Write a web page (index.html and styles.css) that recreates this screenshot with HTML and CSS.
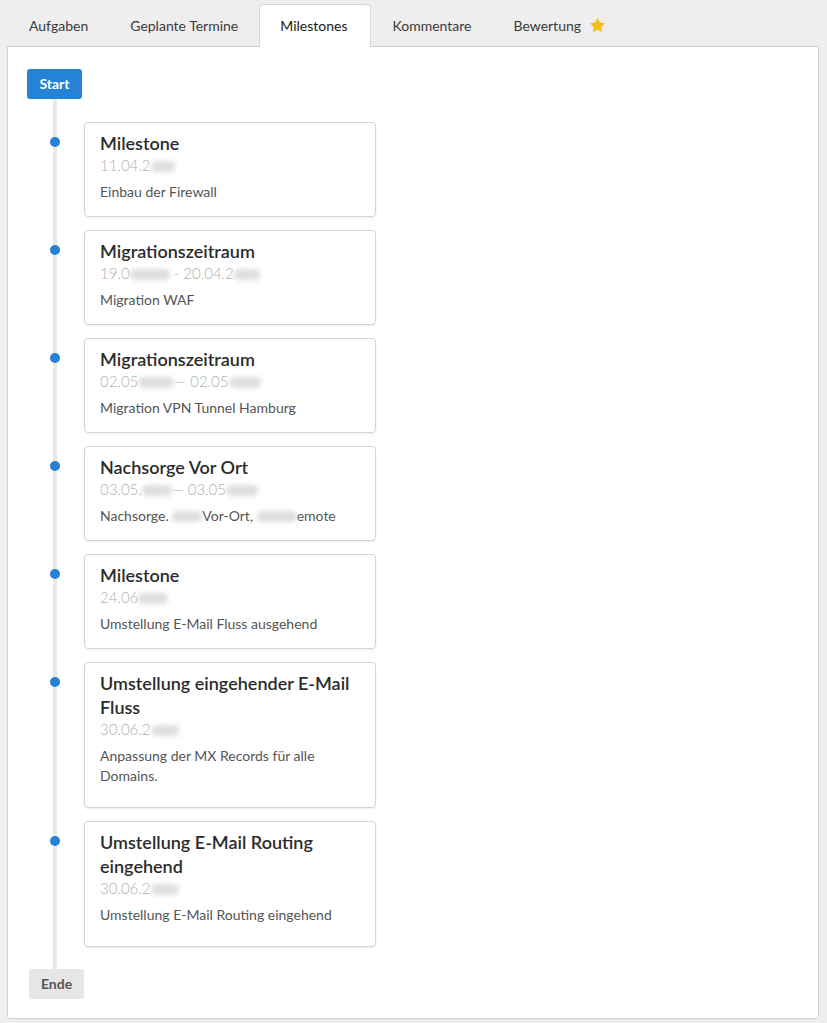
FILE: index.html
```html
<!DOCTYPE html>
<html lang="de">
<head>
    <meta charset="UTF-8">
    <meta name="viewport" content="width=device-width, initial-scale=1.0">
    <title>Milestones</title>
    <link rel="stylesheet" href="styles.css">
</head>
<body>
    <ul class="tabs">
        <li class="tab">Aufgaben</li>
        <li class="tab">Geplante Termine</li>
        <li class="tab active">Milestones</li>
        <li class="tab">Kommentare</li>
        <li class="tab">Bewertung
            <svg class="star" width="17" height="16" viewBox="0 0 24 23"><path d="M12 1l3.3 7 7.7.9-5.7 5.3 1.5 7.6L12 18l-6.8 3.8 1.5-7.6L1 8.9 8.7 8z" fill="#f6bd16"/></svg>
        </li>
    </ul>

    <div class="panel">
        <span class="pill pill-start">Start</span>

        <ul class="timeline">
            <li class="item">
                <div class="card">
                    <h3>Milestone</h3>
                    <div class="date">11.04.2<span class="blur" style="width:24px"></span></div>
                    <p>Einbau der Firewall</p>
                </div>
            </li>
            <li class="item">
                <div class="card">
                    <h3>Migrationszeitraum</h3>
                    <div class="date">19.0<span class="blur" style="width:40px"></span> - 20.04.2<span class="blur" style="width:26px"></span></div>
                    <p>Migration WAF</p>
                </div>
            </li>
            <li class="item">
                <div class="card">
                    <h3>Migrationszeitraum</h3>
                    <div class="date">02.05<span class="blur" style="width:36px"></span>— 02.05<span class="blur" style="width:32px"></span></div>
                    <p>Migration VPN Tunnel Hamburg</p>
                </div>
            </li>
            <li class="item">
                <div class="card">
                    <h3>Nachsorge Vor Ort</h3>
                    <div class="date">03.05.<span class="blur" style="width:30px"></span>— 03.05<span class="blur" style="width:32px"></span></div>
                    <p>Nachsorge. <span class="blur" style="width:30px"></span>Vor-Ort, <span class="blur" style="width:40px"></span>emote</p>
                </div>
            </li>
            <li class="item">
                <div class="card">
                    <h3>Milestone</h3>
                    <div class="date">24.06<span class="blur" style="width:30px"></span></div>
                    <p>Umstellung E-Mail Fluss ausgehend</p>
                </div>
            </li>
            <li class="item">
                <div class="card card-long">
                    <h3>Umstellung eingehender E-Mail Fluss</h3>
                    <div class="date">30.06.2<span class="blur" style="width:28px"></span></div>
                    <p>Anpassung der MX Records für alle Domains.</p>
                </div>
            </li>
            <li class="item">
                <div class="card card-long">
                    <h3>Umstellung E-Mail Routing eingehend</h3>
                    <div class="date">30.06.2<span class="blur" style="width:28px"></span></div>
                    <p>Umstellung E-Mail Routing eingehend</p>
                </div>
            </li>
        </ul>

        <span class="pill pill-end">Ende</span>
    </div>
</body>
</html>
```

FILE: styles.css
```css
* {
    box-sizing: border-box;
}

body {
    margin: 0;
    padding: 4px 8px 4px 7px;
    font-family: Lato, "Open Sans", Arial, sans-serif;
    font-size: 14px;
    color: #333;
    background-color: #eeeeee;
}

/* Reiter oben */
.tabs {
    list-style: none;
    margin: 0;
    padding: 0 0 0 1px;
    display: flex;
    position: relative;
    z-index: 1;
}

.tab {
    display: flex;
    align-items: center;
    gap: 8px;
    height: 43px;
    padding: 0 20px 1px;
    border: 1px solid transparent;
    border-bottom: none;
    border-radius: 4px 4px 0 0;
    color: #3a3a3a;
    cursor: pointer;
}

.tab.active {
    padding-right: 23px;
    background-color: #fff;
    border-color: #d6d6d6;
    color: #1a1a1a;
}

.star {
    margin-top: -2px;
}

.panel {
    margin-top: -1px;
    background-color: #fff;
    border: 1px solid #d0d0d0;
    border-radius: 0 0 3px 3px;
    padding: 22px 19px 19px;
}

.pill {
    display: inline-block;
    width: 55px;
    height: 30px;
    line-height: 30px;
    text-align: center;
    font-size: 14px;
    font-weight: bold;
    border-radius: 3px;
    vertical-align: top;
}

.pill-start {
    background-color: #2483d6;
    color: #fff;
}

.pill-end {
    margin-left: 2px;
    background-color: #e6e6e6;
    color: #555;
}

/* Zeitleiste */
.timeline {
    list-style: none;
    margin: 0;
    padding: 23px 0 22px 57px;
    position: relative;
}

.timeline::before {
    content: "";
    position: absolute;
    left: 26px;
    top: 0;
    bottom: 0;
    width: 4px;
    background-color: #e8e8e8;
}

.item {
    position: relative;
    margin-bottom: 13px;
}

.item:last-child {
    margin-bottom: 0;
}

.item::before {
    content: "";
    position: absolute;
    left: -34px;
    top: 15px;
    width: 10px;
    height: 10px;
    border-radius: 50%;
    background-color: #2483d6;
}

.card {
    width: 292px;
    padding: 8px 15px 14px;
    border: 1px solid #d4d4d4;
    border-radius: 4px;
    box-shadow: 0 1px 2px rgba(0, 0, 0, 0.08);
}

.card-long {
    padding-bottom: 21px;
}

.card h3 {
    margin: 0;
    font-size: 18px;
    font-weight: 600;
    line-height: 24px;
    color: #2b2b2b;
}

.date {
    font-size: 15px;
    line-height: 20px;
    font-weight: 300;
    color: #b0b0b0;
}

.card p {
    margin: 7px 0 0;
    font-size: 14px;
    line-height: 20px;
    color: #555;
}

.blur {
    display: inline-block;
    height: 11px;
    vertical-align: -1px;
    background-color: #dedede;
    border-radius: 5px;
    filter: blur(2.5px);
}
```
